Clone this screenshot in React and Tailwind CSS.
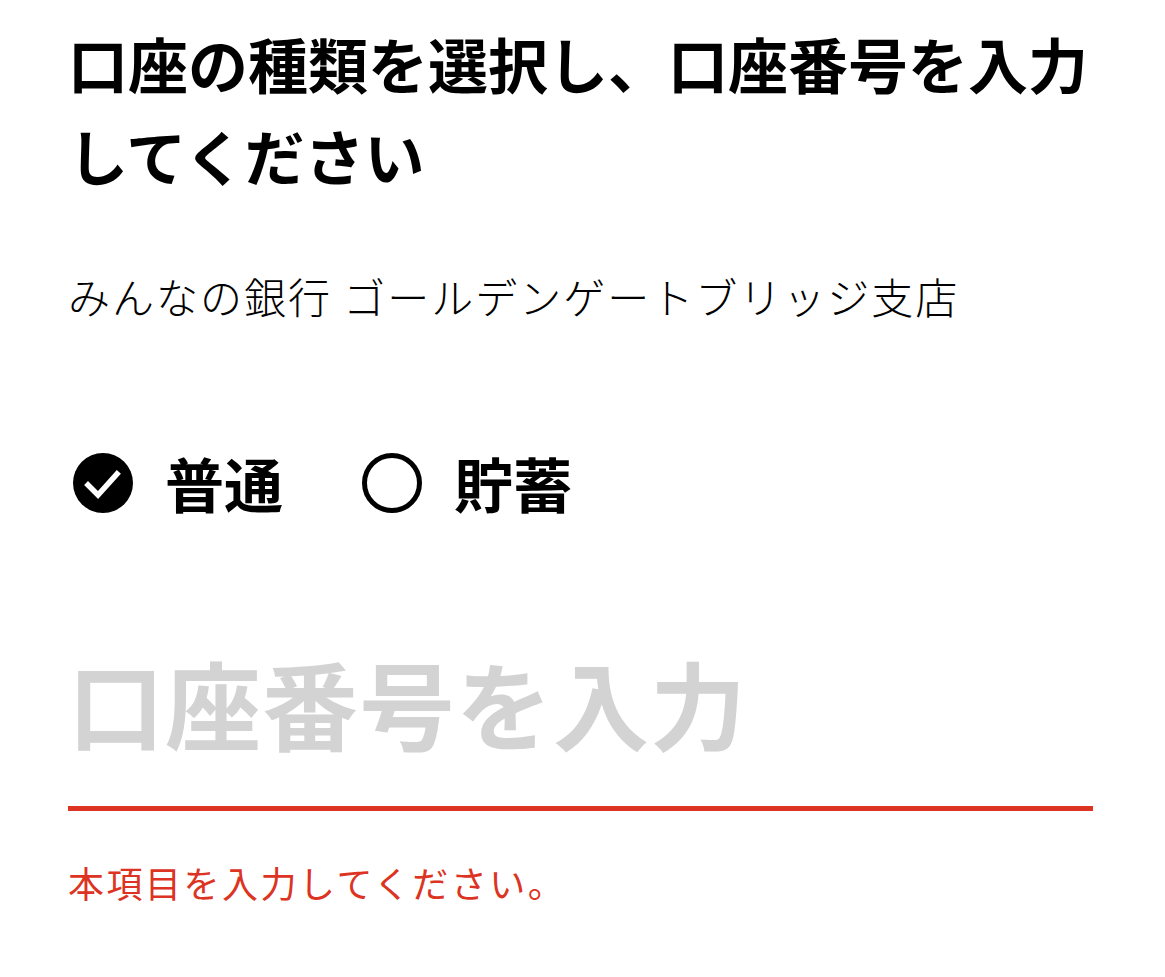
import { useState } from 'react';

const font = { fontFamily: '"Noto Sans CJK JP", "Noto Sans", sans-serif' };

const RadioMark = ({ checked }) =>
  checked ? (
    <svg viewBox="0 0 60 60" className="w-[60px] h-[60px] shrink-0">
      <circle cx="30" cy="30" r="30" fill="#000" />
      <path d="M15 32 L25 42 L44 21" fill="none" stroke="#fff" strokeWidth="5.5" strokeLinecap="square" />
    </svg>
  ) : (
    <svg viewBox="0 0 60 60" className="w-[60px] h-[60px] shrink-0">
      <circle cx="30" cy="30" r="27.5" fill="none" stroke="#000" strokeWidth="5" />
    </svg>
  );

export default function App() {
  const [kind, setKind] = useState('futsu');
  const [number, setNumber] = useState('');

  const options = [
    { id: 'futsu', label: '普通' },
    { id: 'chochiku', label: '貯蓄' },
  ];

  return (
    <div className="min-h-[977px] bg-white pl-[68px] pr-[72px] pt-[17px] text-black" style={font}>
      <h1 className="text-[60px] leading-[92px] font-bold">
        口座の種類を選択し、口座番号を入力してください
      </h1>

      <p className="mt-[65px] text-[42px] leading-[60px] tracking-[2px] font-light">
        みんなの銀行 ゴールデンゲートブリッジ支店
      </p>

      {/* account kind */}
      <div className="mt-[127px] flex items-center pl-[5px]">
        {options.map((opt) => (
          <button
            key={opt.id}
            type="button"
            onClick={() => setKind(opt.id)}
            className="flex items-center gap-[32px] mr-[79px]"
          >
            <RadioMark checked={kind === opt.id} />
            <span className="text-[59px] leading-[60px] font-bold">{opt.label}</span>
          </button>
        ))}
      </div>

      {/* account number */}
      <div className="mt-[129px] border-b-[5px] border-[#dc3323]">
        <input
          value={number}
          onChange={(e) => setNumber(e.target.value)}
          placeholder="口座番号を入力"
          className="w-full h-[120px] mb-[44px] text-[96px] leading-[120px] font-bold outline-none placeholder:text-[#d3d3d3] tracking-[1px]"
          style={font}
        />
      </div>

      <p className="mt-[47px] text-[36px] leading-[48px] tracking-[2.5px] text-[#dc3323]">
        本項目を入力してください。
      </p>
    </div>
  );
}
